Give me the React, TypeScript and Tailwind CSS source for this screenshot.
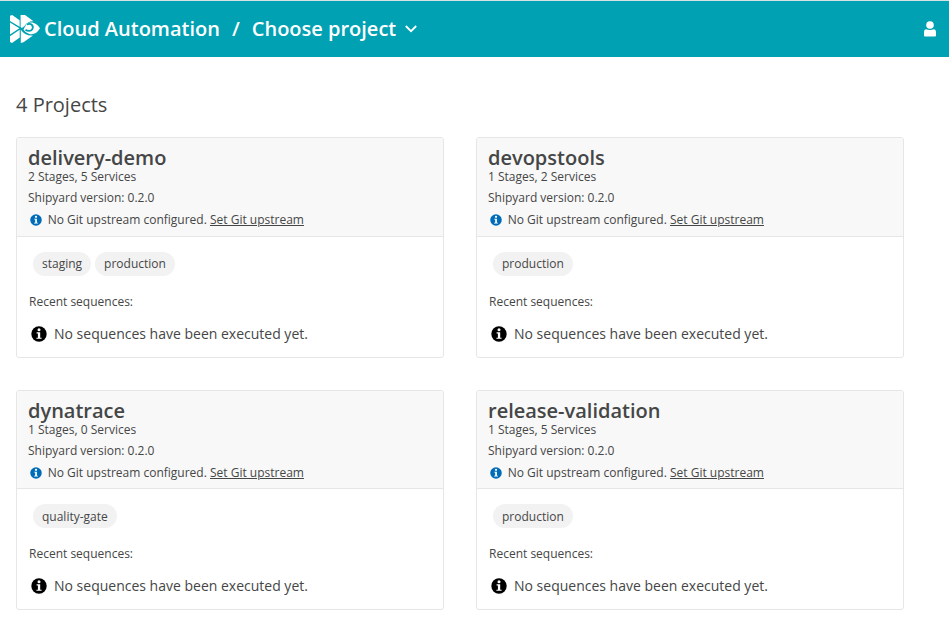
type Project = { name: string; stages: string[]; services: number };

const projects: Project[] = [
  { name: "delivery-demo", stages: ["staging", "production"], services: 5 },
  { name: "devopstools", stages: ["production"], services: 2 },
  { name: "dynatrace", stages: ["quality-gate"], services: 0 },
  { name: "release-validation", stages: ["production"], services: 5 },
];

function InfoIcon({ className }: { className: string }) {
  return (
    <svg viewBox="0 0 16 16" className={className}>
      <circle cx="8" cy="8" r="7.7" fill="currentColor" />
      <circle cx="8" cy="3.7" r="1.5" fill="#fff" />
      <path d="M5.6 6.3h3.6v5.4h1.4v1.1H5.4v-1.1h1.5V7.4H5.6z" fill="#fff" />
    </svg>
  );
}

function Logo() {
  return (
    <svg viewBox="0 0 30 28" className="h-7 w-[30px] shrink-0" fill="#fff">
      <path d="M0 .8 2.2 0 9.6 5.3 9.7 11.8 0 5.9z" />
      <path d="M10.6 0H15L23.500 6.3C20 6 16.500 7.500 14.500 11L12 13 10.600 12z" />
      <path d="M0 7.600 9.400 13.200 0 19.600z" />
      <path d="M0 21.300 9.700 14.800V22.500L2 28 0 27z" />
      <path d="M10.800 14.800C13.500 18.800 17.600 21 23 20.500L13.500 27.200 10.800 28z" />
      <path d="M17 8.500C22.500 5.800 27.500 9.300 30 13.300C27.500 17.800 23.500 20.300 19.300 19C16.300 18 14.500 16.200 13.500 14.500C15.200 11.500 15.500 10 17 8.500z" />
      <path
        d="M16.800 9.400C21.500 7.800 24 11 22.300 14.200C20.900 16.500 17.500 16.300 15.500 14.700"
        fill="none"
        stroke="#00a1b2"
        strokeWidth="1.800"
      />
    </svg>
  );
}

function ProjectCard({ project }: { project: Project }) {
  return (
    <article className="h-[220.300px] overflow-hidden rounded-[3px] border border-[#e6e6e6] bg-white">
      <header className="h-[98.800px] border-b border-[#e6e6e6] bg-[#f8f8f8] pl-[11px] pt-[10px] text-xs">
        <h2 className="text-xl font-semibold leading-5">{project.name}</h2>
        <p className="mt-[1px] h-4 leading-4">
          {project.stages.length} Stages, {project.services} Services
        </p>
        <p className="mt-[5px] h-4 leading-4">Shipyard version: 0.2.0</p>
        <p className="mt-[6px] flex h-4 items-center leading-4">
          <InfoIcon className="ml-[2px] mr-[5.700px] h-3 w-3 text-[#006bb8]" />
          <span>
            No Git upstream configured. <a className="underline">Set Git upstream</a>
          </span>
        </p>
      </header>
      <div className="pl-3 pt-[15px]">
        <div className="flex gap-1 pl-1">
          {project.stages.map((stage) => (
            <span key={stage} className="flex h-6 items-center rounded-full bg-[#f2f2f2] px-[9px] pt-[0.500px] text-xs">
              {stage}
            </span>
          ))}
        </div>
        <p className="mt-[18px] text-xs leading-4">Recent sequences:</p>
        <p className="mt-[14px] flex items-center text-sm leading-5">
          <InfoIcon className="ml-[2px] mr-[7px] h-4 w-4 text-black" />
          No sequences have been executed yet.
        </p>
      </div>
    </article>
  );
}

export default function App() {
  return (
    <div className="h-[619px] overflow-hidden bg-white font-['Open_Sans',sans-serif] text-[#454646]">
      <nav className="flex h-[57px] items-center border-t border-[#d5e0e2] bg-[#00a1b2] pl-[10px] pr-[13px] text-xl font-semibold text-white">
        <Logo />
        <span className="ml-[4px]">Cloud Automation</span>
        <span className="ml-3">/</span>
        <span className="ml-3">Choose project</span>
        <svg viewBox="0 0 12 8" className="ml-[9px] h-2 w-3" fill="none" stroke="currentColor" strokeWidth="1.8">
          <path d="m.8 1 5.200 5.200L11.200 1" />
        </svg>
        <svg viewBox="0 0 12 16" className="ml-auto h-4 w-3" fill="currentColor">
          <circle cx="6" cy="4" r="3.800" />
          <path d="M2 8.300Q6 9.600 10 8.300 12 8.600 12 11v3.500Q12 15.500 11 15.500H1Q0 15.500 0 14.500V11Q0 8.600 2 8.300z" />
        </svg>
      </nav>
      <main className="px-4 pt-[34px]">
        <h1 className="text-xl leading-7">4 Projects</h1>
        <div className="mt-[18.300px] grid grid-cols-[428px_428px] gap-8">
          {projects.map((project) => (
            <ProjectCard key={project.name} project={project} />
          ))}
        </div>
      </main>
    </div>
  );
}
